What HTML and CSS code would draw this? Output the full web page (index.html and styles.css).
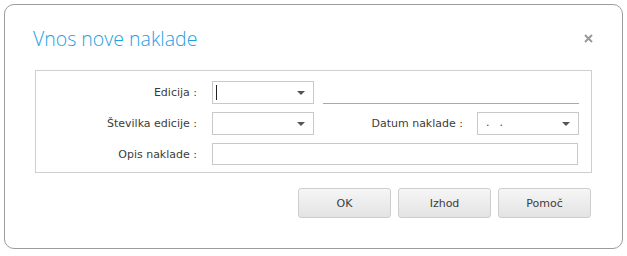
FILE: index.html
```html
<!DOCTYPE html>
<html lang="sl">
<head>
  <meta charset="UTF-8" />
  <title>Vnos nove naklade</title>
  <link rel="stylesheet" href="styles.css">
</head>
<body>
  <div class="dialog">
    <div class="dialog-header">
      <h1 class="dialog-title">Vnos nove naklade</h1>
      <button class="close-btn" aria-label="Zapri">
        <svg width="9" height="9" viewBox="0 0 9 9">
          <path d="M1 1 L8 8 M8 1 L1 8" stroke="#9a9a9a" stroke-width="2" fill="none" />
        </svg>
      </button>
    </div>

    <div class="form-box">
      <div class="form-row">
        <label class="field-label">Edicija :</label>
        <div class="combo"><span class="caret"></span><span class="arrow"></span></div>
        <div class="underline"></div>
      </div>
      <div class="form-row">
        <label class="field-label">Številka edicije :</label>
        <div class="combo"><span class="arrow"></span></div>
        <label class="field-label date-label">Datum naklade :</label>
        <div class="combo"><span class="combo-text">.&nbsp;&nbsp;.</span><span class="arrow"></span></div>
      </div>
      <div class="form-row">
        <label class="field-label">Opis naklade :</label>
        <div class="text-input"></div>
      </div>
    </div>

    <div class="dialog-buttons">
      <button class="btn">OK</button>
      <button class="btn">Izhod</button>
      <button class="btn">Pomoč</button>
    </div>
  </div>
</body>
</html>
```

FILE: styles.css
```css
body {
  margin: 0;
  padding: 4px;
  background: #fff;
  font-family: "DejaVu Sans", Tahoma, sans-serif;
  font-size: 11px;
  color: #3c3c3c;
}

.dialog {
  width: 557px;
  height: 243px;
  border: 1px solid #9c9c9c;
  border-radius: 10px;
  padding: 0 30px;
}

.dialog-header {
  display: flex;
  align-items: center;
  justify-content: space-between;
  height: 65px;
}

.dialog-title {
  margin: 0 0 0 -2px;
  padding-top: 1px;
  font-family: "Open Sans", sans-serif;
  font-weight: 300;
  font-size: 19.5px;
  color: #1ba1e2;
}

.close-btn {
  border: none;
  background: none;
  padding: 0;
  margin-right: -1px;
  margin-top: 1px;
  width: 9px;
  height: 9px;
  display: flex;
}

.form-box {
  border: 1px solid #cfcfcf;
  padding: 10px 12px 7px 0;
}

.form-row {
  display: flex;
  align-items: center;
  margin-bottom: 8px;
}

.form-row:last-child {
  margin-bottom: 0;
}

.field-label {
  width: 161px;
  text-align: right;
  margin-right: 15px;
  flex-shrink: 0;
}

.date-label {
  width: auto;
  flex: 1;
  margin-right: 14px;
}

.combo {
  position: relative;
  width: 100px;
  height: 21px;
  border: 1px solid #c9c9c9;
  background: #fff;
  flex-shrink: 0;
}

.combo-text {
  position: absolute;
  left: 8px;
  top: 3px;
  letter-spacing: 1px;
}

.caret {
  position: absolute;
  left: 3px;
  top: 3px;
  width: 1px;
  height: 15px;
  background: #222;
}

.arrow {
  position: absolute;
  right: 8px;
  top: 9px;
  width: 0;
  height: 0;
  border-left: 4px solid transparent;
  border-right: 4px solid transparent;
  border-top: 4px solid #555;
}

.underline {
  flex: 1;
  align-self: flex-end;
  margin: 0 0 0 9px;
  border-bottom: 1px solid #a9a9a9;
}

.text-input {
  flex: 1;
  height: 20px;
  border: 1px solid #c9c9c9;
  margin-right: 1px;
}

.dialog-buttons {
  display: flex;
  justify-content: flex-end;
  gap: 7px;
  margin-top: 15px;
  margin-right: 1px;
}

.btn {
  width: 93px;
  height: 30px;
  border: 1px solid #cdcdcd;
  border-radius: 3px;
  background: linear-gradient(#f6f6f6, #e3e3e3);
  font-family: "DejaVu Sans", Tahoma, sans-serif;
  font-size: 11px;
  color: #3c3c3c;
}
```
